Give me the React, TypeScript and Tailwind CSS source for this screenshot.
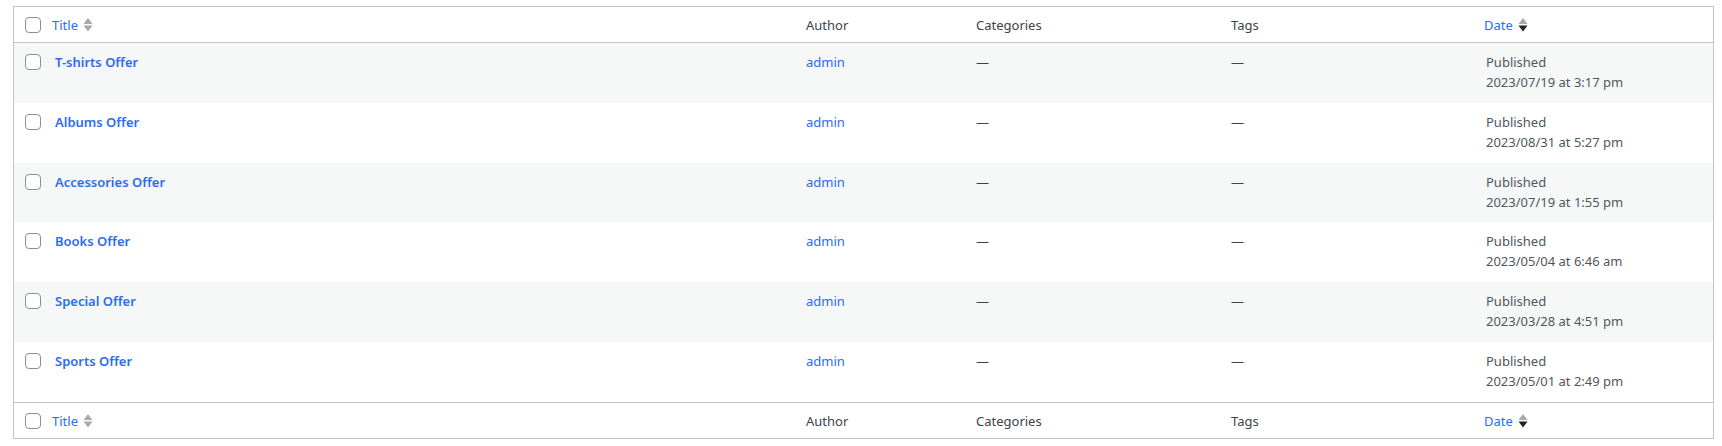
import React from "react";

const posts = [
  { title: "T-shirts Offer", date: "2023/07/19 at 3:17 pm" },
  { title: "Albums Offer", date: "2023/08/31 at 5:27 pm" },
  { title: "Accessories Offer", date: "2023/07/19 at 1:55 pm" },
  { title: "Books Offer", date: "2023/05/04 at 6:46 am" },
  { title: "Special Offer", date: "2023/03/28 at 4:51 pm" },
  { title: "Sports Offer", date: "2023/05/01 at 2:49 pm" },
];

const cols = "grid grid-cols-[29px_753px_170px_255px_253px_1fr]";

function Checkbox() {
  return <span className="block w-4 h-4 rounded-[4px] border border-[#8c8f94] bg-white" />;
}

function SortIcon({ active }: { active?: boolean }) {
  return (
    <svg width="10" height="17" viewBox="0 0 10 17" className="ml-[5px]">
      <polygon points="0.5,8 5,2 9.5,8" fill="#a7aaad" />
      <polygon points="0.5,9.5 5,15.5 9.5,9.5" fill={active ? "#1d2327" : "#a7aaad"} />
    </svg>
  );
}

function HeadRow({ footer }: { footer?: boolean }) {
  return (
    <div className={`${cols} h-[36px] bg-white ${footer ? "border-t" : "border-b"} border-[#c3c4c7] text-[13px] leading-5 text-[#3c434a]`}>
      <div className="pl-[11px] pt-[10px]">
        <Checkbox />
      </div>
      <div className="pl-[9px] pt-[8px] flex items-start">
        <span className="text-[#2c6cf3]">Title</span>
        <span className="mt-[1px]"><SortIcon /></span>
      </div>
      <div className="pl-[10px] pt-[8px]">Author</div>
      <div className="pl-[10px] pt-[8px]">Categories</div>
      <div className="pl-[10px] pt-[8px]">Tags</div>
      <div className="pl-[10px] pt-[8px] flex items-start">
        <span className="text-[#2c6cf3]">Date</span>
        <span className="mt-[1px]"><SortIcon active /></span>
      </div>
    </div>
  );
}

export default function App() {
  return (
    <div className="bg-white w-[1722px] h-[446px] pt-[6px] pl-[13px]" style={{ fontFamily: '"Noto Sans", "Liberation Sans", sans-serif' }}>
      <div className="w-[1701px] border border-[#c3c4c7]">
        <HeadRow />
        {posts.map((p, i) => (
          <div
            key={p.title}
            className={`${cols} h-[59.8px] text-[13px] leading-5 ${i % 2 === 0 ? "bg-[#f6f7f7]" : "bg-white"}`}
          >
            <div className="pl-[11px] pt-[11px]">
              <Checkbox />
            </div>
            <div className="pl-[12px] pt-[9px]">
              <span className="font-semibold text-[#2c6cf3]">{p.title}</span>
            </div>
            <div className="pl-[10px] pt-[9px] text-[#2c6cf3]">admin</div>
            <div className="pl-[10px] pt-[9px] text-[#3c434a]">—</div>
            <div className="pl-[10px] pt-[9px] text-[#3c434a]">—</div>
            <div className="pl-[12px] pt-[9px] text-[#50575e]">
              <div>Published</div>
              <div>{p.date}</div>
            </div>
          </div>
        ))}
        <HeadRow footer />
      </div>
    </div>
  );
}
